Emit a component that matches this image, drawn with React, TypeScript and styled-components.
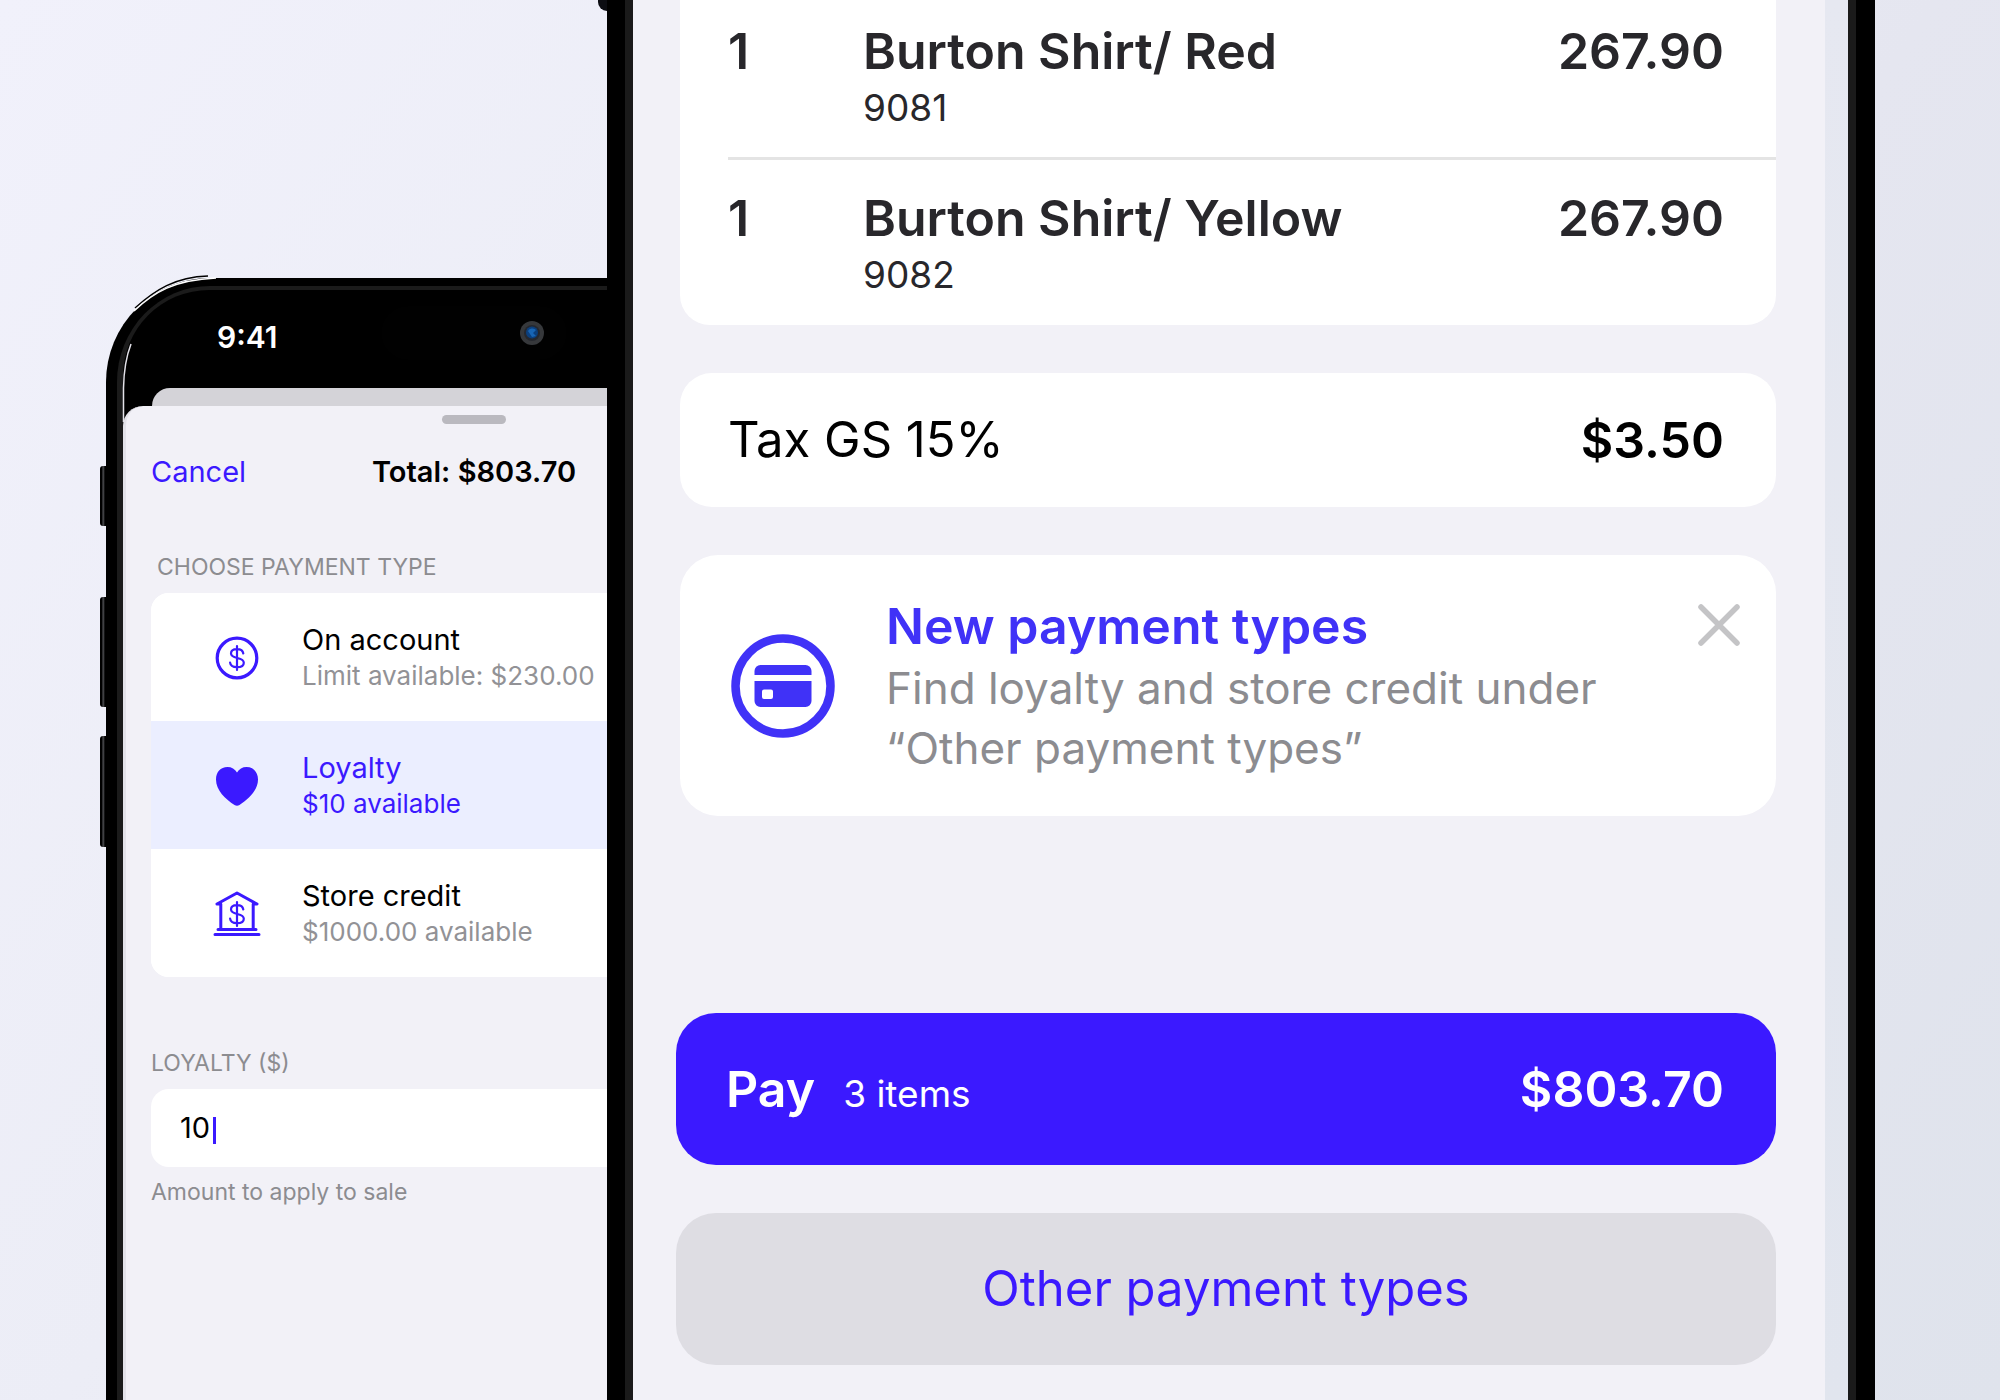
import React from "react";
import styled, { createGlobalStyle, css } from "styled-components";

const INDIGO = "#3b19ff";
const GREY = "#8c8c90";
const SCREEN = "#f2f1f7";

const GlobalStyle = createGlobalStyle`
  *, *::before, *::after { box-sizing: border-box; }
  body {
    margin: 0;
    font-family: Inter, "Liberation Sans", sans-serif;
    color: #000;
  }
  h1, h2, p, ul { margin: 0; padding: 0; }
  ul { list-style: none; }
  button, input { font: inherit; color: inherit; }
  button { border: 0; padding: 0; background: none; cursor: pointer; }
`;

/* ---------- stage ---------- */

const Stage = styled.main`
  display: grid;
  grid-template-columns:
    minmax(0, 106fr) minmax(0, 501fr) minmax(0, 1268fr) minmax(0, 125fr);
  min-height: 100vh;
  overflow: hidden;
  background: linear-gradient(125deg, #f1f1fb 0%, #ecedf6 35%, #e5e6f0 65%, #dfe3ec 100%);
`;

const SideKey = styled.span<{ $top: number; $height: number }>`
  position: absolute;
  z-index: -1;
  top: ${(p) => p.$top}px;
  left: -6px;
  width: 8px;
  height: ${(p) => p.$height}px;
  border-radius: 3px 0 0 3px;
  background: linear-gradient(90deg, #000 0 2px, #55565a 3px, #000 5px);
`;

/* ---------- small phone ---------- */

const SmallPhone = styled.section`
  position: relative;
  z-index: 0;
  grid-column: 2;
  display: flex;
  width: 736px;
  margin-top: 278px;
`;

const SmallFrame = styled.div`
  flex: 1;
  display: flex;
  border: solid #000;
  border-width: 8px 11px 0;
  border-radius: 104px 104px 0 0;
  background: #1b1b1b;
  padding: 4px 6px 0;
`;

const SmallScreen = styled.div`
  flex: 1;
  display: flex;
  flex-direction: column;
  border-radius: 86px 86px 0 0;
  background: #000;
  overflow: hidden;
`;

const Shine = styled.svg`
  position: absolute;
  top: -4px;
  left: 0;
  pointer-events: none;
`;

const StatusBar = styled.div`
  display: grid;
  grid-template-columns: 1fr 186px 1fr;
  align-items: start;
  height: 98px;
  padding-top: 16px;
`;

const Clock = styled.span`
  padding-left: 94px;
  font-size: 30px;
  font-weight: 600;
  line-height: 62px;
  color: #fff;
`;

const Island = styled.div`
  display: flex;
  align-items: center;
  justify-content: flex-end;
  height: 54px;
  padding-right: 22px;
  border-radius: 27px;
  background: #010101;
`;

const BackSheet = styled.div`
  height: 34px;
  margin: 0 29px -16px;
  border-radius: 18px 18px 0 0;
  background: #d4d3d8;
`;

const Sheet = styled.div`
  flex: 1;
  padding: 9px 28px 0 25px;
  border-left: 3px solid #e3e2e9;
  border-radius: 20px 20px 0 0;
  background: ${SCREEN};
`;

const Grabber = styled.div`
  width: 64px;
  height: 9px;
  margin: 0 auto;
  border-radius: 5px;
  background: #bab9bf;
`;

const SheetHeader = styled.header`
  display: grid;
  grid-template-columns: 1fr auto 1fr;
  align-items: center;
  height: 94px;
`;

const Cancel = styled.button`
  justify-self: start;
  font-size: 29px;
  color: ${INDIGO};
`;

const Total = styled.h2`
  font-size: 29px;
  font-weight: 600;
`;

const SectionTitle = styled.h2`
  padding: 34px 6px 0;
  font-size: 23px;
  font-weight: 400;
  line-height: 30px;
  color: ${GREY};
`;

const Options = styled.ul`
  margin-top: 11px;
  border-radius: 18px;
  background: #fff;
  overflow: hidden;
`;

const Option = styled.button<{ $selected?: boolean }>`
  display: flex;
  align-items: center;
  gap: 41px;
  width: 100%;
  height: 128px;
  padding: 2px 0 0 62px;
  text-align: left;
  color: ${(p) => (p.$selected ? INDIGO : "#000")};
  background: ${(p) => (p.$selected ? "#ebeeff" : "#fff")};

  svg { flex: none; color: ${INDIGO}; }
`;

const OptionName = styled.span`
  display: block;
  font-size: 29px;
  line-height: 36px;
`;

const OptionNote = styled.span<{ $selected?: boolean }>`
  display: block;
  font-size: 26px;
  line-height: 36px;
  color: ${(p) => (p.$selected ? INDIGO : "#929296")};
`;

const Field = styled.div`
  display: flex;
  flex-direction: column;
  padding-top: 71px;
  font-size: 23px;
  line-height: 30px;
  color: ${GREY};
`;

const AmountBox = styled.div`
  display: flex;
  align-items: center;
  height: 78px;
  margin: 11px 0 10px;
  padding: 0 29px;
  border-radius: 18px;
  background: #fff;
`;

const AmountInput = styled.input`
  width: 33px;
  border: 0;
  padding: 0;
  outline: 0;
  background: transparent;
  font-size: 29px;
  color: #000;
`;

const Caret = styled.span`
  width: 3px;
  height: 27px;
  margin-top: 5px;
  background: ${INDIGO};
`;

/* ---------- large phone ---------- */

const LargePhone = styled.section`
  position: relative;
  z-index: 1;
  grid-column: 3;
  display: flex;
  border: solid #000;
  border-width: 0 19px 0 18px;
`;

const Bezel = styled.div`
  flex: 1;
  display: flex;
  border: solid #1a1a1a;
  border-width: 0 8px;
`;

const LargeKey = styled.span`
  position: absolute;
  top: 0;
  left: -27px;
  width: 9px;
  height: 11px;
  border-radius: 0 0 0 9px;
  background: #0c0d12;
`;

const LargeScreen = styled.div`
  flex: 1;
  padding: 0 49px 35px 43px;
  background: ${SCREEN};
`;

const Glass = styled.div`
  width: 23px;
  background: linear-gradient(#e6e8f1, #e1e5ee);
`;

const Stack = styled.div`
  display: flex;
  flex-direction: column;
  gap: 48px;
  padding-left: 4px;
`;

const cardBase = css`
  background: #fff;
  font-size: 50px;
  line-height: 60px;
`;

const Items = styled.ul`
  ${cardBase}
  padding-left: 48px;
  border-radius: 0 0 30px 30px;
  color: #28272b;
`;

const Item = styled.li`
  display: grid;
  grid-template-columns: 135px 1fr auto;
  height: 168px;
  padding: 28px 52px 0 0;
  font-weight: 600;

  &:first-child { height: 157px; padding-top: 21px; }
  & + & { border-top: 3px solid #e4e4e4; }
`;

const Sku = styled.span`
  display: block;
  font-size: 37px;
  font-weight: 400;
  line-height: 54px;
`;

const TaxCard = styled.div`
  ${cardBase}
  display: flex;
  align-items: center;
  justify-content: space-between;
  height: 134px;
  padding: 0 52px 0 48px;
  border-radius: 32px;
  font-size: 49px;

  strong { font-size: 50px; font-weight: 600; }
`;

const Notice = styled.article`
  ${cardBase}
  display: flex;
  align-items: center;
  height: 261px;
  padding: 0 35px 0 51px;
  border-radius: 38px;

  > svg { flex: none; }
`;

const NoticeBody = styled.div`
  flex: 1;
  padding-left: 51px;
`;

const NoticeTitle = styled.h2`
  font-size: 50px;
  font-weight: 600;
  line-height: 64px;
  color: #4032f7;
`;

const NoticeText = styled.p`
  font-size: 44px;
  line-height: 60px;
  color: ${GREY};
`;

const Close = styled.button`
  display: flex;
  align-self: flex-start;
  margin-top: 48px;
`;

const Actions = styled.div`
  display: flex;
  flex-direction: column;
  gap: 48px;
  margin-top: 197px;
`;

const BigButton = styled.button<{ $primary?: boolean }>`
  display: flex;
  align-items: baseline;
  justify-content: ${(p) => (p.$primary ? "flex-start" : "center")};
  height: 152px;
  padding: ${(p) => (p.$primary ? "0 52px 0 50px" : "0")};
  border-radius: 40px;
  font-size: ${(p) => (p.$primary ? 50 : 49)}px;
  line-height: 152px;
  font-weight: ${(p) => (p.$primary ? 600 : 400)};
  color: ${(p) => (p.$primary ? "#fff" : INDIGO)};
  background: ${(p) => (p.$primary ? INDIGO : "#dedde3")};
`;

const Count = styled.span`
  flex: 1;
  padding-left: 28px;
  font-size: 37px;
  font-weight: 400;
  text-align: left;
`;

/* ---------- icons ---------- */

const Dollar = () => (
  <path
    d="M30.300 19.500c-.4-2.700-2.800-4.300-6.300-4.300-3.500 0-6 1.700-6 4.400 0 5.900 12.800 3 12.800 9.100 0 2.700-2.700 4.500-6.800 4.500-4 0-6.600-1.700-6.900-4.500M24 12v24"
    fill="none"
    stroke="currentColor"
    strokeWidth="2.200"
    strokeLinecap="round"
  />
);

const CoinIcon = () => (
  <svg width="48" height="48" viewBox="0 0 48 48" aria-hidden="true">
    <circle cx="24" cy="24" r="19.800" fill="none" stroke="currentColor" strokeWidth="3.200" />
    <Dollar />
  </svg>
);

const HeartIcon = () => (
  <svg width="48" height="48" viewBox="0 0 48 48" aria-hidden="true">
    <path d="M24 10.500c2-3.500 5.400-5.500 9.500-5.500C40.500 5 45 10.200 45 17.500c0 11-9.500 19.500-18.500 25.500q-2.500 1.600-5 0C12.500 37 3 28.500 3 17.500 3 10.200 7.500 5 14.500 5c4.100 0 7.500 2 9.500 5.500Z" fill="currentColor" />
  </svg>
);

const BankIcon = () => (
  <svg width="48" height="48" viewBox="0 0 48 48" aria-hidden="true">
    <g fill="none" stroke="currentColor" strokeWidth="3" strokeLinecap="round" strokeLinejoin="round">
      <path d="M4 14 24 3l20 11H40.500M4 14h3.500" />
      <path d="M7.800 14v25M40.200 14v25" />
      <path d="M5 39.500h38M2 44.500h44" />
    </g>
    <Dollar />
  </svg>
);

const CardBadge = () => (
  <svg width="104" height="104" viewBox="0 0 104 104" aria-hidden="true">
    <circle cx="52" cy="52" r="47.500" fill="none" stroke="#4032f7" strokeWidth="8.500" />
    <path fill="#4032f7" d="M29.500 31h45a6 6 0 0 1 6 6v4h-57v-4a6 6 0 0 1 6-6Z" />
    <path fill="#4032f7" fillRule="evenodd" d="M23.500 47h57v20a6 6 0 0 1-6 6h-45a6 6 0 0 1-6-6Zm9.500 8.500a2 2 0 0 0-2 2V63a2 2 0 0 0 2 2h7a2 2 0 0 0 2-2v-5.500a2 2 0 0 0-2-2Z" />
  </svg>
);

const CrossIcon = () => (
  <svg width="44" height="44" viewBox="0 0 44 44" aria-hidden="true">
    <path d="m4 4 36 36M40 4 4 40" stroke="#c4c4c6" strokeWidth="5.500" strokeLinecap="round" />
  </svg>
);

const CameraIcon = () => (
  <svg width="26" height="26" viewBox="0 0 26 26" aria-hidden="true">
    <circle cx="13" cy="13" r="12" fill="#36383b" />
    <circle cx="13" cy="13" r="8" fill="#25282f" />
    <circle cx="13" cy="12.500" r="6" fill="#0b3f7d" />
    <path d="M9 11a5 5 0 0 1 8-1l-3 3 3 3-4 1Z" fill="#1765b5" />
  </svg>
);

const CornerShine = () => (
  <Shine width="120" height="148" viewBox="0 -4 120 148" fill="none" aria-hidden="true">
    <path d="M29 30C49 12 69-1 102-2" stroke="#000" strokeWidth="1.500" />
    <path d="M28 33C48 14 68 2 110 0" stroke="#fff" strokeWidth="1.500" />
    <path d="M25 66Q18 84 17.500 110V144" stroke="#e3e2e9" strokeWidth="1.500" />
  </Shine>
);

/* ---------- data ---------- */

const options = [
  { name: "On account", note: "Limit available: $230.00", Icon: CoinIcon, selected: false },
  { name: "Loyalty", note: "$10 available", Icon: HeartIcon, selected: true },
  { name: "Store credit", note: "$1000.00 available", Icon: BankIcon, selected: false },
];

const items = [
  { qty: 1, name: "Burton Shirt/ Red", sku: "9081", price: "267.90" },
  { qty: 1, name: "Burton Shirt/ Yellow", sku: "9082", price: "267.90" },
];

export default function App() {
  const [amount, setAmount] = React.useState("10");

  return (
    <>
      <GlobalStyle />
      <Stage>
        <SmallPhone>
          <SideKey $top={188} $height={60} />
          <SideKey $top={319} $height={110} />
          <SideKey $top={458} $height={111} />
          <SmallFrame>
            <SmallScreen>
              <StatusBar>
                <Clock>9:41</Clock>
                <Island>
                  <CameraIcon />
                </Island>
              </StatusBar>
              <BackSheet />
              <Sheet>
                <Grabber />
                <SheetHeader>
                  <Cancel type="button">Cancel</Cancel>
                  <Total>Total: $803.70</Total>
                </SheetHeader>
                <SectionTitle>CHOOSE PAYMENT TYPE</SectionTitle>
                <Options>
                  {options.map(({ name, note, Icon, selected }) => (
                    <li key={name}>
                      <Option type="button" $selected={selected} aria-pressed={selected}>
                        <Icon />
                        <span>
                          <OptionName>{name}</OptionName>
                          <OptionNote $selected={selected}>{note}</OptionNote>
                        </span>
                      </Option>
                    </li>
                  ))}
                </Options>
                <Field>
                  <label htmlFor="loyalty-amount">LOYALTY ($)</label>
                  <AmountBox>
                    <AmountInput
                      id="loyalty-amount"
                      inputMode="decimal"
                      aria-describedby="loyalty-help"
                      value={amount}
                      onChange={(e) => setAmount(e.target.value)}
                    />
                    <Caret />
                  </AmountBox>
                  <p id="loyalty-help">Amount to apply to sale</p>
                </Field>
              </Sheet>
            </SmallScreen>
          </SmallFrame>
          <CornerShine />
        </SmallPhone>

        <LargePhone>
          <LargeKey />
          <Bezel>
            <LargeScreen>
              <Stack>
                <Items>
                  {items.map((item) => (
                    <Item key={item.sku}>
                      <span>{item.qty}</span>
                      <span>
                        {item.name}
                        <Sku>{item.sku}</Sku>
                      </span>
                      <span>{item.price}</span>
                    </Item>
                  ))}
                </Items>
                <TaxCard>
                  <span>Tax GS 15%</span>
                  <strong>$3.50</strong>
                </TaxCard>
                <Notice>
                  <CardBadge />
                  <NoticeBody>
                    <NoticeTitle>New payment types</NoticeTitle>
                    <NoticeText>
                      Find loyalty and store credit under
                      <br />
                      “Other payment types”
                    </NoticeText>
                  </NoticeBody>
                  <Close type="button" aria-label="Dismiss">
                    <CrossIcon />
                  </Close>
                </Notice>
              </Stack>
              <Actions>
                <BigButton type="button" $primary>
                  Pay
                  <Count>3 items</Count>
                  <span>$803.70</span>
                </BigButton>
                <BigButton type="button">Other payment types</BigButton>
              </Actions>
            </LargeScreen>
            <Glass />
          </Bezel>
        </LargePhone>
      </Stage>
    </>
  );
}
